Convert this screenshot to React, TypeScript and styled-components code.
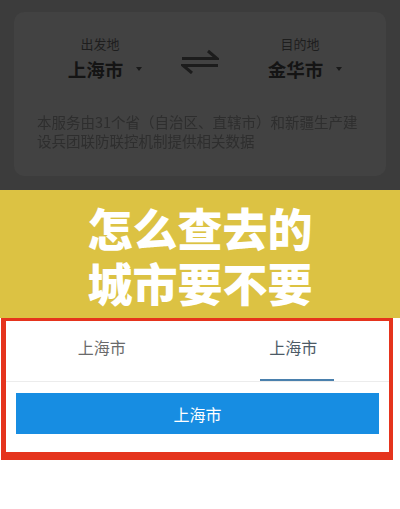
import React from "react";
import styled, { createGlobalStyle } from "styled-components";

const GlobalStyle = createGlobalStyle`
    html, body {
        margin: 0;
        padding: 0;
        background: #ffffff;
    }
    body {
        font-family: "Noto Sans CJK SC", "Noto Sans", sans-serif;
    }
`;

const SPage = styled.div`
    width: 400px;
    min-height: 509px;
    background: #ffffff;
`;

const SDim = styled.div`
    height: 190px;
    box-sizing: border-box;
    padding: 12px 14px 14px 14px;
    background: #3c3c3c;
`;

const SCard = styled.div`
    height: 164px;
    box-sizing: border-box;
    padding-top: 24px;
    border-radius: 10px;
    background: #424242;
`;

const SRoute = styled.div`
    display: grid;
    grid-template-columns: 1fr 60px 1fr;
    align-items: center;
    padding: 0 16px;
`;

const SPlace = styled.div`
    display: flex;
    flex-direction: column;
    align-items: center;
`;

const SLabel = styled.div`
    font-size: 13px;
    line-height: 16px;
    color: #1e1e1e;
`;

const SCityRow = styled.div`
    display: flex;
    align-items: center;
    margin-top: 5px;
    padding-left: 10px;
`;

const SCity = styled.span`
    font-size: 18.5px;
    line-height: 24px;
    font-weight: 700;
    color: #141414;
`;

const STriangle = styled.span`
    margin-left: 13px;
    width: 0;
    height: 0;
    border-left: 3.5px solid transparent;
    border-right: 3.5px solid transparent;
    border-top: 4px solid #1a1a1a;
`;

const SSwap = styled.div`
    display: flex;
    justify-content: center;
    padding-top: 4px;
`;

const SNote = styled.p`
    margin: 31px 0 0 0;
    padding: 0 23px;
    font-size: 14.5px;
    line-height: 19px;
    color: #2e2e2e;
    filter: blur(0.4px);
`;

const SBanner = styled.div`
    height: 128px;
    box-sizing: border-box;
    padding-top: 10px;
    background: #dcc243;
    text-align: center;
`;

const STitle = styled.h1`
    margin: 0;
    font-size: 45px;
    line-height: 55px;
    font-weight: 900;
    color: #ffffff;
`;

const SFrame = styled.div`
    margin-left: 1px;
    width: 392px;
    box-sizing: border-box;
    border-style: solid;
    border-color: #e5341d;
    border-width: 3px 4px 8px 5px;
    background: #ffffff;
    padding-bottom: 18px;
`;

const STabs = styled.div`
    display: grid;
    grid-template-columns: 1fr 1fr;
    border-bottom: 1px solid #ececec;
`;

interface TabProps {
    $active?: boolean
}

const STab = styled.div<TabProps>`
    height: 60px;
    box-sizing: border-box;
    padding-top: 15px;
    display: flex;
    flex-direction: column;
    align-items: center;
    justify-content: space-between;
    font-size: 16px;
    line-height: 22px;
    color: ${props => props.$active ? "#4c5a66" : "#6a6a6a"};
`;

const SUnderline = styled.div<TabProps>`
    width: 74px;
    height: 2px;
    margin-left: 8px;
    background: ${props => props.$active ? "#4a80ad" : "transparent"};
`;

const SButton = styled.button`
    display: block;
    box-sizing: border-box;
    margin: 11px 10px 0 10px;
    width: calc(100% - 20px);
    height: 41px;
    border: none;
    border-radius: 0;
    background: #178de2;
    color: #ffffff;
    font-family: inherit;
    font-size: 16px;
`;

const SwapIcon = () => (
    <svg width="38" height="26" viewBox="0 0 38 26">
        <g stroke="#1c1c1c" strokeWidth="3" fill="none" strokeLinecap="butt">
            <path d="M1 10.5 H36 L27 3" />
            <path d="M37 17.5 H2 L11 25" />
        </g>
    </svg>
);

export default function App() {
    return (
        <SPage>
            <GlobalStyle />
            <SDim>
                <SCard>
                    <SRoute>
                        <SPlace>
                            <SLabel>出发地</SLabel>
                            <SCityRow>
                                <SCity>上海市</SCity>
                                <STriangle />
                            </SCityRow>
                        </SPlace>
                        <SSwap>
                            <SwapIcon />
                        </SSwap>
                        <SPlace>
                            <SLabel>目的地</SLabel>
                            <SCityRow>
                                <SCity>金华市</SCity>
                                <STriangle />
                            </SCityRow>
                        </SPlace>
                    </SRoute>
                    <SNote>
                        本服务由31个省（自治区、直辖市）和新疆生产建<br />
                        设兵团联防联控机制提供相关数据
                    </SNote>
                </SCard>
            </SDim>
            <SBanner>
                <STitle>怎么查去的<br />城市要不要</STitle>
            </SBanner>
            <SFrame>
                <STabs>
                    <STab>
                        <span>上海市</span>
                        <SUnderline />
                    </STab>
                    <STab $active>
                        <span>上海市</span>
                        <SUnderline $active />
                    </STab>
                </STabs>
                <SButton>上海市</SButton>
            </SFrame>
        </SPage>
    );
}
